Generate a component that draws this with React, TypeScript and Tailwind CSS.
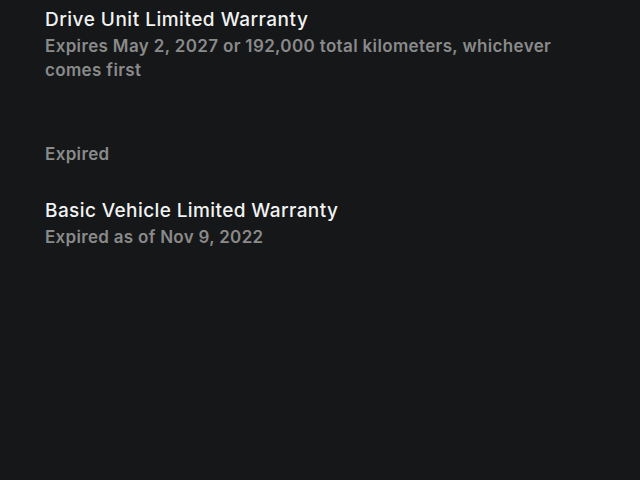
export default function App() {
  return (
    <div className="w-[640px] h-[480px] bg-[#151719] overflow-hidden" style={{ fontFamily: "Inter, 'Noto Sans', sans-serif" }}>
      <div className="px-[45px] pt-[7px] flex flex-col">
        <div className="flex flex-col">
          <div className="text-[19px] leading-[26px] font-medium tracking-[0.5px] text-[#f2f2f2]">Drive Unit Limited Warranty</div>
          <div className="mt-[1px] text-[17px] leading-[24px] font-semibold tracking-[0.35px] text-[#8a8a8a] w-[520px]">
            Expires May 2, 2027 or 192,000 total kilometers, whichever comes first
          </div>
        </div>
        <div className="mt-[60px] text-[17px] leading-[24px] font-semibold tracking-[0.35px] text-[#8a8a8a]">Expired</div>
        <div className="mt-[32px] flex flex-col">
          <div className="text-[19px] leading-[26px] font-medium tracking-[0.4px] text-[#f2f2f2]">Basic Vehicle Limited Warranty</div>
          <div className="mt-[1px] text-[17px] leading-[24px] font-semibold tracking-[0.3px] text-[#8a8a8a]">Expired as of Nov 9, 2022</div>
        </div>
      </div>
    </div>
  );
}
